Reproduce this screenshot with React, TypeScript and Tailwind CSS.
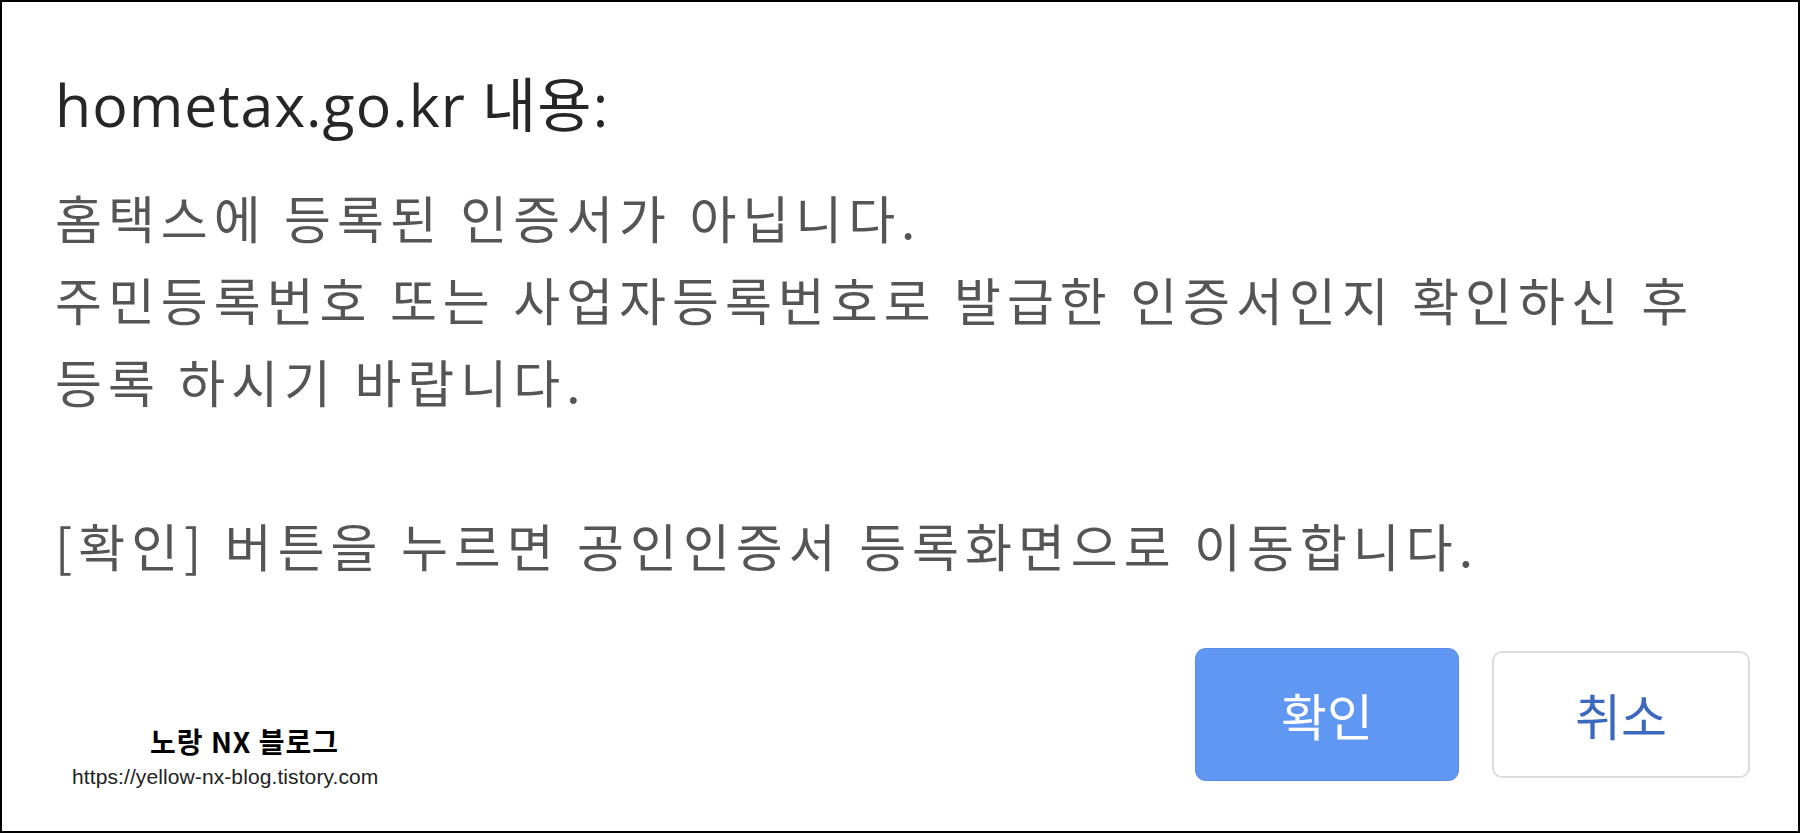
import React from 'react'

const lines = [
  '홈택스에 등록된 인증서가 아닙니다.',
  '주민등록번호 또는 사업자등록번호로 발급한 인증서인지 확인하신 후',
  '등록 하시기 바랍니다.',
  '',
  '[확인] 버튼을 누르면 공인인증서 등록화면으로 이동합니다.',
]

export default function App() {
  return (
    <div className="w-[1800px] h-[833px] border-2 border-black bg-white flex flex-col pl-[53px] pr-[48px] font-['Noto_Sans_CJK_KR',sans-serif]">
      {/* Dialog title */}
      <h1 className="mt-[66px] leading-[72px] text-[59px] tracking-[1px] text-[#262626] font-normal font-['Open_Sans','Noto_Sans_CJK_KR',sans-serif]">
        hometax.go.kr 내용:
      </h1>

      {/* Message */}
      <div className="mt-[36px] text-[51px] leading-[82px] tracking-[6px] text-[#555]">
        {lines.map((line, i) => (
          <p key={i} className="h-[82px] whitespace-nowrap">{line}</p>
        ))}
      </div>

      {/* Footer: watermark + buttons */}
      <div className="mt-[63px] flex items-start justify-between">
        <div className="mt-[76px] ml-[17px] flex flex-col items-start">
          <span className="ml-[78px] text-[28px] leading-[32px] font-bold text-black tracking-[1px]">노랑 NX 블로그</span>
          <span className="mt-[8px] text-[21px] leading-[24px] text-[#222] tracking-[0.1px] font-['Liberation_Sans',sans-serif]">
            https://yellow-nx-blog.tistory.com
          </span>
        </div>

        <div className="flex gap-[34px]">
          <button className="w-[262px] h-[131px] rounded-[10px] bg-[#5f97f2] text-white text-[50px] shadow-[0_0_0_1px_#5b8fe6]">
            확인
          </button>
          <button className="mt-[2px] w-[258px] h-[127px] rounded-[10px] bg-white border-2 border-[#dcdcdc] text-[#3a69bd] text-[50px]">
            취소
          </button>
        </div>
      </div>
    </div>
  )
}
